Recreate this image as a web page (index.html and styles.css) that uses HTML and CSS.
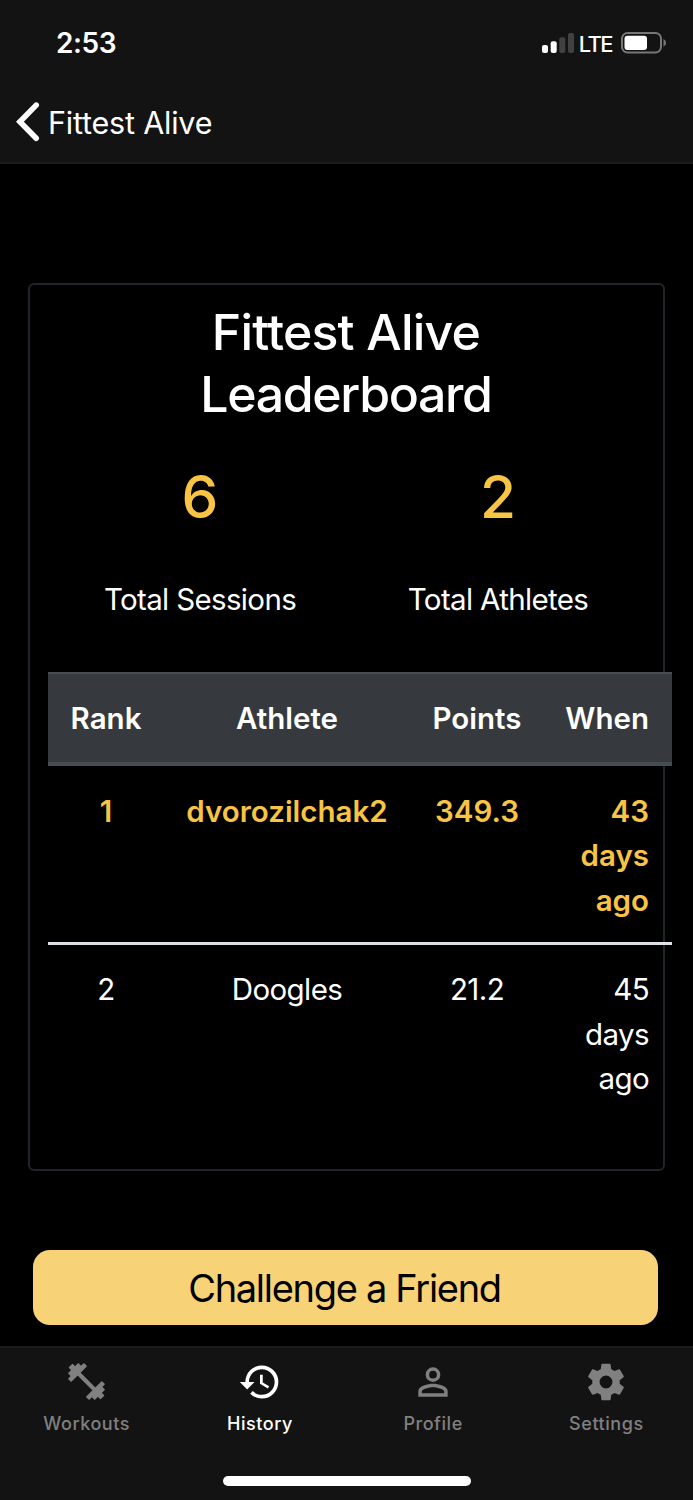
FILE: index.html
```html
<!DOCTYPE html>
<html lang="en">
<head>
<meta charset="utf-8">
<title>Fittest Alive</title>
<link rel="stylesheet" href="styles.css">
</head>
<body>
<div class="app">
  <header class="header">
    <div class="status">
      <span class="clock">2:53</span>
      <div class="status-right">
        <svg class="signal" width="32" height="20" viewBox="0 0 32 20">
          <rect x="0" y="12" width="6" height="8" rx="2" fill="#fff"/>
          <rect x="8.7" y="8.3" width="6" height="11.700" rx="2" fill="#fff"/>
          <rect x="17.300" y="4.200" width="6" height="15.800" rx="2" fill="#414141"/>
          <rect x="26" y="0" width="6" height="20" rx="2" fill="#414141"/>
        </svg>
        <span class="carrier">LTE</span>
        <svg class="battery" width="46" height="22" viewBox="0 0 46 22">
          <rect x="1" y="1" width="39" height="19.500" rx="5.500" fill="none" stroke="#777" stroke-width="2"/>
          <rect x="3.500" y="3.700" width="22.500" height="14.200" rx="3" fill="#fff"/>
          <path d="M42.500 7q2.500 1.200 2.500 3.900t-2.500 3.900z" fill="#777"/>
        </svg>
      </div>
    </div>
    <div class="nav">
      <svg class="chevron" width="24" height="40" viewBox="0 0 24 40">
        <path d="M20.200 3.100L3.900 19.700L20.200 36.300" fill="none" stroke="#fff" stroke-width="5.600" stroke-linecap="round" stroke-linejoin="miter"/>
      </svg>
      <span class="nav-title">Fittest Alive</span>
    </div>
  </header>

  <main class="main">
    <section class="card">
      <h1 class="title"><span class="title-a">Fittest Alive</span><br><span class="title-b">Leaderboard</span></h1>
      <div class="stats">
        <div class="stat"><div class="value">6</div><div class="label">Total Sessions</div></div>
        <div class="stat"><div class="value">2</div><div class="label">Total Athletes</div></div>
      </div>
      <table class="board">
        <colgroup><col class="c-rank"><col class="c-athlete"><col class="c-points"><col class="c-when"></colgroup>
        <thead><tr><th>Rank</th><th>Athlete</th><th>Points</th><th class="when">When</th></tr></thead>
        <tbody>
          <tr class="leader"><td>1</td><td>dvorozilchak2</td><td>349.3</td><td class="when">43<br>days<br>ago</td></tr>
          <tr class="second"><td>2</td><td>Doogles</td><td>21.2</td><td class="when">45<br>days<br>ago</td></tr>
        </tbody>
      </table>
    </section>
    <button class="challenge" type="button">Challenge a Friend</button>
  </main>

  <footer class="footer">
    <nav class="tabs">
      <div class="tab">
        <svg class="icon" width="44" height="44" viewBox="0 0 44 44">
          <g transform="translate(21.500 21.500) rotate(45)" fill="#808080">
            <rect x="-12" y="-2" width="24" height="4"/>
            <rect x="-22.600" y="-2.800" width="4.800" height="5.600" rx=".6"/><rect x="-19" y="-7.400" width="4.800" height="14.800" rx=".8"/><rect x="-15" y="-11.300" width="4.600" height="22.600" rx=".8"/>
            <rect x="10.400" y="-11.300" width="4.600" height="22.600" rx=".8"/><rect x="14.200" y="-7.400" width="4.800" height="14.800" rx=".8"/><rect x="17.800" y="-2.800" width="4.800" height="5.600" rx=".6"/>
          </g>
        </svg>
        <span class="tab-label">Workouts</span>
      </div>
      <div class="tab active">
        <svg class="icon" width="44" height="44" viewBox="0 0 24 24"><path fill="#fff" d="M13 3a9 9 0 0 0-9 9H1l3.890 3.890.07.14L9 12H6c0-3.870 3.130-7 7-7s7 3.130 7 7-3.130 7-7 7c-1.930 0-3.680-.79-4.940-2.060l-1.420 1.420A8.954 8.954 0 0 0 13 21a9 9 0 0 0 0-18zm-1 5v5l4.280 2.540.72-1.210-3.500-2.080V8H12z"/></svg>
        <span class="tab-label">History</span>
      </div>
      <div class="tab">
        <svg class="icon" width="44" height="44" viewBox="0 0 24 24"><path fill="#808080" d="M12 4a4 4 0 0 1 4 4 4 4 0 0 1-4 4 4 4 0 0 1-4-4 4 4 0 0 1 4-4m0 1.900a2.100 2.100 0 0 0 0 4.200 2.100 2.100 0 0 0 0-4.200M12 13c2.670 0 8 1.330 8 4v3H4v-3c0-2.670 5.330-4 8-4m0 1.900c-2.970 0-6.100 1.460-6.100 2.100v1.100h12.200V17c0-.64-3.130-2.100-6.100-2.100z"/></svg>
        <span class="tab-label">Profile</span>
      </div>
      <div class="tab">
        <svg class="icon" width="44" height="44" viewBox="0 0 24 24"><path fill="#808080" d="M12 15.500A3.500 3.500 0 0 1 8.500 12 3.500 3.500 0 0 1 12 8.500a3.500 3.500 0 0 1 3.500 3.500 3.500 3.500 0 0 1-3.500 3.500m7.430-2.530c.04-.32.07-.64.07-.97s-.03-.66-.07-1l2.110-1.630c.19-.15.24-.42.12-.64l-2-3.460c-.12-.22-.39-.31-.61-.22l-2.490 1c-.52-.39-1.060-.73-1.690-.98l-.37-2.650A.506.506 0 0 0 14 2h-4c-.25 0-.46.18-.5.420l-.37 2.650c-.63.250-1.170.590-1.690.980l-2.490-1c-.22-.09-.49 0-.61.220l-2 3.460c-.13.220-.07.490.12.640L4.570 11c-.04.340-.07.670-.07 1s.03.650.07.970l-2.110 1.660c-.19.150-.25.420-.12.640l2 3.460c.12.220.39.300.61.220l2.490-1.010c.52.400 1.060.740 1.690.990l.37 2.650c.04.240.25.420.5.420h4c.25 0 .46-.18.5-.42l.37-2.650c.63-.26 1.170-.59 1.690-.99l2.490 1.010c.22.080.49 0 .61-.22l2-3.460c.12-.22.070-.49-.12-.64z"/></svg>
        <span class="tab-label">Settings</span>
      </div>
    </nav>
    <div class="home"></div>
  </footer>
</div>
</body>
</html>
```

FILE: styles.css
```css
* { box-sizing: border-box; }
body { margin: 0; background: #000; color: #fff; font-family: Inter, "Liberation Sans", sans-serif; }
svg { display: block; }
.app { width: 693px; height: 1500px; display: flex; flex-direction: column; overflow: hidden; }

.header { height: 164px; flex: none; background: #131313; border-bottom: 2px solid #1c1c1c; }
.status { height: 84px; display: flex; justify-content: space-between; align-items: center; padding: 2px 26px 0 56px; }
.clock { font-size: 28px; font-weight: 600; letter-spacing: -0.400px; line-height: 34px; }
.status-right { display: flex; align-items: center; }
.carrier { font-size: 22px; line-height: 30px; font-weight: 500; letter-spacing: -1.600px; margin: 1px 9px 0 5px; }
.nav { height: 76px; display: flex; align-items: center; gap: 8px; padding: 0 0 0 16px; }
.nav-title { font-size: 30.500px; line-height: 40px; letter-spacing: -0.200px; padding-top: 1px; }

.main { flex: none; height: 1182px; padding: 119px 28px 0; }
.card { width: 637px; height: 888px; border: 2px solid #212529; border-radius: 6px; padding: 17px 18px 18px; }
.title { margin: 0; text-align: center; font-size: 50px; line-height: 61.500px; font-weight: 500; }
.title-a { letter-spacing: -0.800px; margin-left: -1px; }
.title-b { letter-spacing: -1.350px; margin-left: -1px; }
.stats { width: 596px; height: 211px; margin: 36px 0 0 3px; display: grid; grid-template-columns: 1fr 1fr; }
.stat { text-align: center; }
.value { font-size: 58.500px; line-height: 72px; font-weight: 500; color: #f8c444; }
.label { font-size: 29.500px; line-height: 44px; margin-top: 44px; letter-spacing: -0.650px; }
.board { width: 624px; border-collapse: separate; border-spacing: 0; table-layout: fixed; font-size: 29.500px; line-height: 44.500px; text-align: center; }
.c-rank { width: 116px; }
.c-athlete { width: 246px; }
.c-points { width: 134px; }
.c-when { width: 128px; }
.board th, .board td { padding: 22px 0; vertical-align: top; }
.board th { padding-bottom: 21px; background: #363a3e; border-top: 2px solid #454d55; border-bottom: 4px solid #454d55; font-weight: 600; }
.board .when { text-align: right; padding-right: 23px; }
.board .leader td { padding-top: 23px; padding-bottom: 20px; color: #f8c444; font-weight: 600; border-bottom: 3px solid #dee2e6; }
.second { letter-spacing: -0.600px; }

.challenge { display: block; width: 625px; height: 75px; margin: 79px 0 0 5px; padding: 0 2px 0 0; border: 0; border-radius: 17px; background: #f8d277; color: #000; font-family: inherit; font-size: 38px; letter-spacing: -1.300px; }

.footer { flex: none; height: 154px; background: #131313; border-top: 2px solid #1c1c1c; }
.tabs { height: 128px; display: grid; grid-template-columns: repeat(4, 1fr); }
.tab { display: flex; flex-direction: column; align-items: center; padding-top: 12px; color: #808080; }
.icon { width: 44px; height: 44px; }
.tab-label { font-size: 18px; line-height: 24px; font-weight: 500; letter-spacing: 0.550px; margin-top: 8px; }
.active { color: #fff; }
.home { width: 248px; height: 10px; margin: 0 auto; border-radius: 5px; background: #fff; }
```
